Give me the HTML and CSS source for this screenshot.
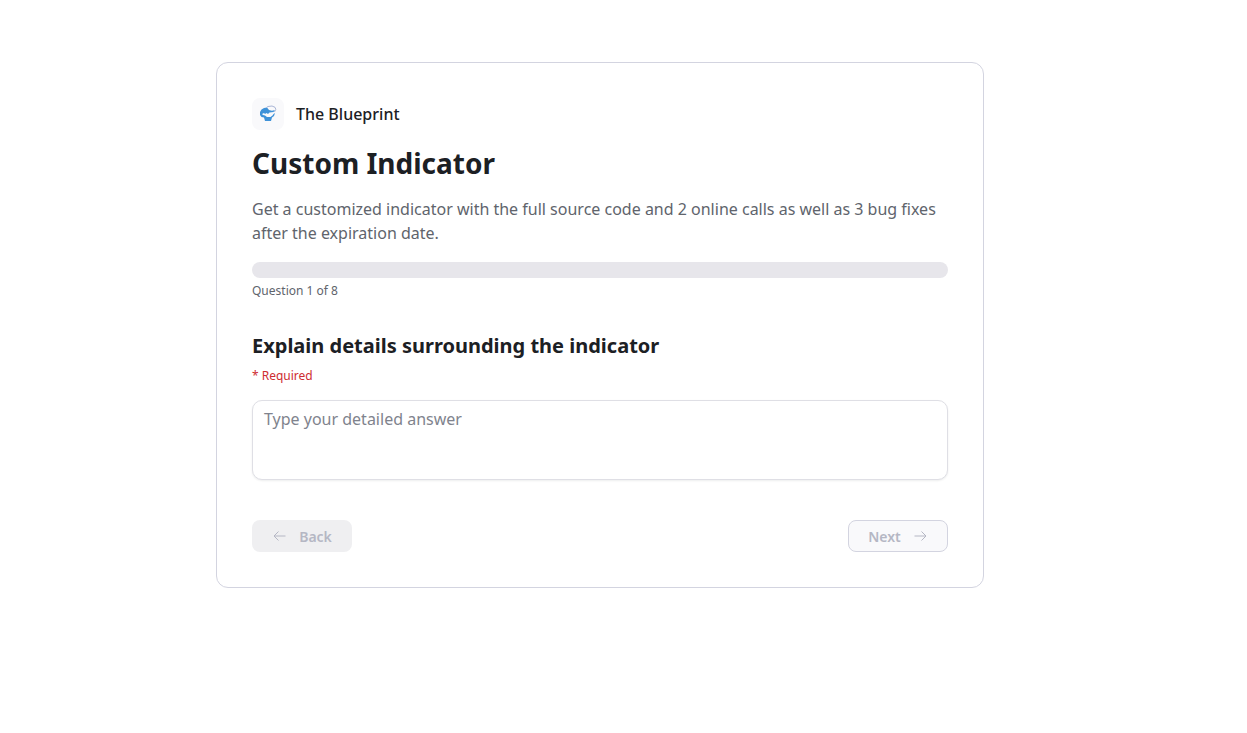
FILE: index.html
```html
<!DOCTYPE html>
<html lang="en">
<head>
    <meta charset="UTF-8">
    <meta name="viewport" content="width=device-width, initial-scale=1.0">
    <title>Custom Indicator - The Blueprint</title>
    <link rel="stylesheet" href="styles.css">
</head>
<body>
    <main class="page">
        <form class="card">
            <!-- Brand -->
            <div class="brand">
                <span class="brand-logo">
                    <svg width="18" height="18" viewBox="0 0 18 18" aria-hidden="true">
                        <path fill="#3f92d8" d="M8 2.500 5 3 2.500 4.500 1 7v3l1.500 2 2.500.500L6 16h6l1-3.500 2-1.500 1-3-1.500 1-1 1.500-2 1.500H8L6 10.500 4 10l-1-1L5 8l1 1 1.500-1L9 9l1.500-1.500 4-.5L16 5l-3 .7L10 5z"/>
                        <path fill="none" stroke="#a9b5d6" d="M7.500 2.500 9 1.500l4-.5 3 1.300.800 2L15.500 7"/>
                    </svg>
                </span>
                <span class="brand-name">The Blueprint</span>
            </div>

            <h1 class="title">Custom Indicator</h1>
            <p class="description">Get a customized indicator with the full source code and 2 online calls as well as 3 bug fixes after the expiration date.</p>

            <!-- Progress -->
            <div class="progress" role="progressbar" aria-labelledby="step" aria-valuemin="0" aria-valuemax="8" aria-valuenow="0"></div>
            <p class="step" id="step">Question 1 of 8</p>

            <!-- Question -->
            <h2 class="question"><label for="answer">Explain details surrounding the indicator</label></h2>
            <p class="required">* Required</p>
            <textarea class="answer" id="answer" placeholder="Type your detailed answer" required></textarea>

            <div class="actions">
                <button class="btn btn-back" type="button" disabled>
                    <svg class="arrow" viewBox="0 0 14 14" aria-hidden="true"><path d="M13.500 7H2M6.500 2.500 2 7l4.500 4.500"/></svg>
                    Back
                </button>
                <button class="btn btn-next" type="submit" disabled>
                    Next
                    <svg class="arrow" viewBox="0 0 14 14" aria-hidden="true"><path d="M.5 7H12M7.500 2.500 12 7l-4.500 4.500"/></svg>
                </button>
            </div>
        </form>
    </main>
</body>
</html>
```
FILE: styles.css
```css
* {
    margin: 0;
    padding: 0;
    box-sizing: border-box;
}

body {
    background-color: #fff;
    color: #1c2024;
    font-family: "Segoe UI", "Noto Sans", sans-serif;
    font-size: 16px;
    line-height: 24px;
}

.page {
    max-width: 1200px;
    padding: 62px 16px;
}

.card {
    max-width: 768px;
    margin: 0 auto;
    padding: 35px;
    border: 1px solid #d3d4e0;
    border-radius: 12px;
}

.brand {
    display: flex;
    align-items: center;
    gap: 12px;
}

.brand-logo {
    display: flex;
    align-items: center;
    justify-content: center;
    width: 32px;
    height: 32px;
    border-radius: 8px;
    background-color: #f9f9fb;
}

.brand-name {
    font-weight: 500;
}

.title {
    margin-top: 15px;
    font-size: 28px;
    font-weight: 700;
    line-height: 36px;
}

.description {
    margin-top: 16px;
    color: #60646c;
}

.progress {
    height: 16px;
    margin-top: 17px;
    border-radius: 8px;
    background-color: #e7e6eb;
}

.step {
    margin-top: 4px;
    color: #60646c;
    font-size: 12px;
    line-height: 18px;
}

.question {
    margin-top: 32px;
    font-size: 20px;
    font-weight: 700;
    line-height: 28px;
}

.required {
    margin-top: 8px;
    color: #ce2c31;
    font-size: 12px;
    line-height: 16px;
}

.answer {
    display: block;
    width: 100%;
    height: 80px;
    margin-top: 16px;
    padding: 6px 11px;
    border: 1px solid #dfdfe5;
    border-radius: 10px;
    box-shadow: 0 1px 2px rgba(28, 32, 36, 0.08);
    background-color: #fff;
    color: inherit;
    font: inherit;
    resize: none;
}

.answer::placeholder {
    color: #80838d;
}

.actions {
    display: flex;
    justify-content: space-between;
    margin-top: 40px;
}

.btn {
    display: flex;
    align-items: center;
    justify-content: center;
    gap: 13px;
    min-width: 100px;
    height: 32px;
    border: 1px solid transparent;
    border-radius: 8px;
    color: #b5b7c4;
    font-family: inherit;
    font-size: 14px;
    font-weight: 600;
}

.btn-back {
    background-color: #efeff1;
}

.btn-next {
    border-color: #d3d4e0;
    background-color: #f9f9fb;
}

.arrow {
    width: 14px;
    height: 14px;
    fill: none;
    stroke: currentColor;
    stroke-width: 1;
}
```
